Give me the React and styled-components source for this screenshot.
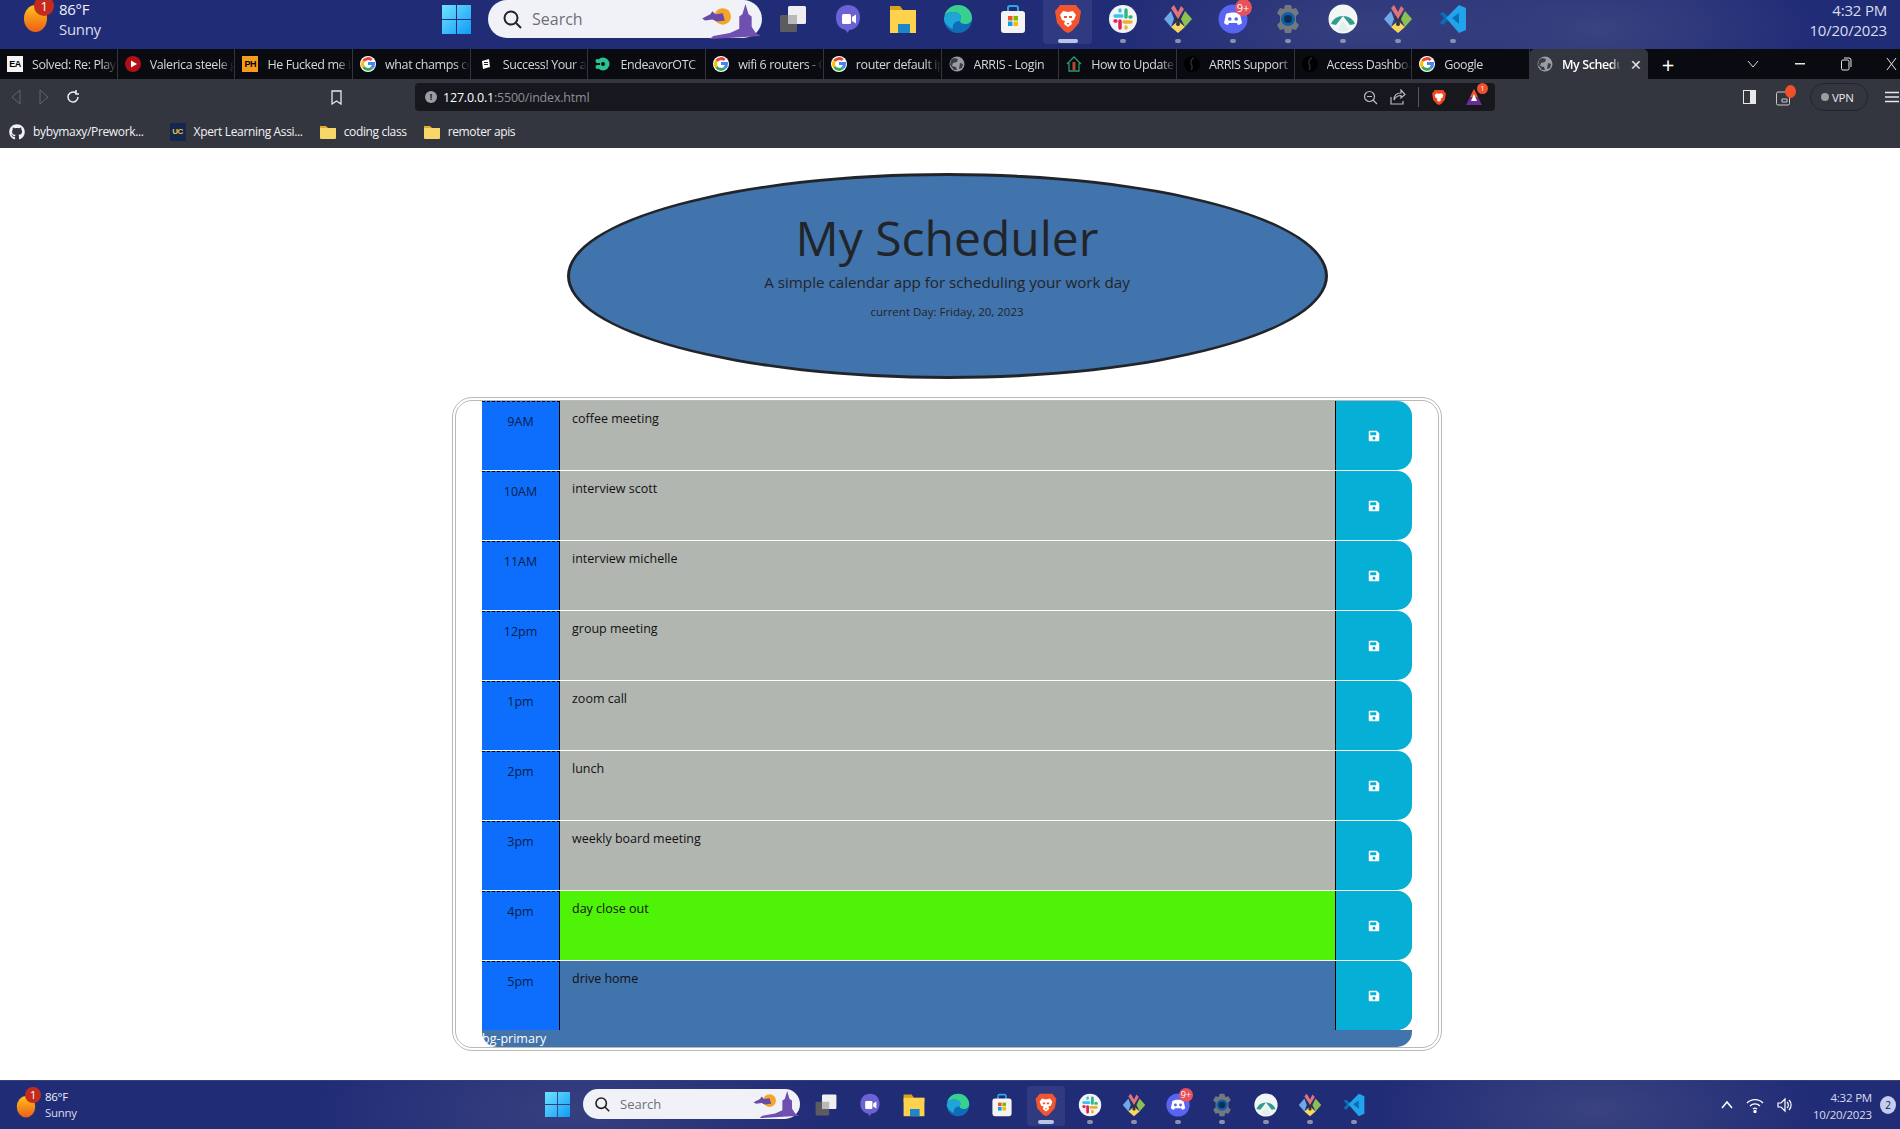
import React from "react";
import styled, { createGlobalStyle } from "styled-components";
import { FaSave, FaGithub } from "react-icons/fa";

const GlobalStyle = createGlobalStyle`
  html, body {
    margin: 0;
    padding: 0;
    height: 100%;
    overflow: hidden;
    background: #fff;
    font-family: "Open Sans", "Liberation Sans", sans-serif;
  }
`;

const hours = [
  { time: "9AM", text: "coffee meeting", tone: "past" },
  { time: "10AM", text: "interview scott", tone: "past" },
  { time: "11AM", text: "interview michelle", tone: "past" },
  { time: "12pm", text: "group meeting", tone: "past" },
  { time: "1pm", text: "zoom call", tone: "past" },
  { time: "2pm", text: "lunch", tone: "past" },
  { time: "3pm", text: "weekly board meeting", tone: "past" },
  { time: "4pm", text: "day close out", tone: "present" },
  { time: "5pm", text: "drive home", tone: "future" },
];

const toneColors = { past: "#b2b6b1", present: "#4ff307", future: "#4173ac" };

/* ---------- icons ---------- */

const WinLogo = () => (
  <svg viewBox="0 0 28 28" width="100%" height="100%">
    <defs>
      <linearGradient id="win" x1="0" y1="0" x2="1" y2="1">
        <stop offset="0" stopColor="#6fe3ff" />
        <stop offset="1" stopColor="#0f9bf5" />
      </linearGradient>
    </defs>
    <path fill="url(#win)" d="M0 0h13.5v13.5H0zM14.5 0H28v13.5H14.5zM0 14.5h13.5V28H0zM14.5 14.5H28V28H14.5z" />
  </svg>
);

const TaskView = () => (
  <svg viewBox="0 0 30 30">
    <rect x="2" y="11" width="17" height="17" rx="1.5" fill="#5c5c60" />
    <rect x="10" y="2" width="18" height="18" rx="1.5" fill="#efeff1" />
    <rect x="10" y="11" width="9" height="9" fill="#b9b9bc" />
  </svg>
);

const Meet = () => (
  <svg viewBox="0 0 30 30">
    <path fill="#6b62d6" d="M15 1c7.2 0 12 5 12 12.5S22 26 16 26l-1 3-3-3.300C6 24.500 3 19.500 3 13.500 3 6 8 1 15 1z" />
    <rect x="9" y="10" width="9" height="10" rx="1.500" fill="#fff" />
    <path fill="#fff" d="M19 13l4-2.500v9L19 17z" />
  </svg>
);

const Folder = () => (
  <svg viewBox="0 0 30 30">
    <path fill="#d9a21b" d="M2 2h10l3 4h13v6H2z" />
    <rect x="2" y="6" width="26" height="23" fill="#ffd24d" />
    <rect x="10" y="20" width="12" height="9" fill="#1c86c9" />
  </svg>
);

const Edge = () => (
  <svg viewBox="0 0 30 30">
    <circle cx="15" cy="15" r="14" fill="#0f6cb8" />
    <path fill="#38d08f" d="M1.500 12C3 5 9 1 15 1c8 0 14 6 14 13 0 4-3 6-7 6-3 0-5-1-5-3 0-1 1-2 1-3.500C18 10 14 8 10 8c-4 0-7 1.500-8.500 4z" />
    <path fill="#1fa5d8" d="M10 8c4 0 8 2 8 5.500 0 1.500-1 2.500-1 3.500-5 0-8 3-7 8C5 23 1 19 1 15c0-4 4-7 9-7z" />
  </svg>
);

const Store = () => (
  <svg viewBox="0 0 30 30">
    <path fill="none" stroke="#2aa7e8" strokeWidth="2" d="M10 9V4a2 2 0 0 1 2-2h6a2 2 0 0 1 2 2v5" />
    <rect x="3" y="7" width="24" height="22" rx="3" fill="#f3f3f3" />
    <rect x="10" y="12" width="4.500" height="4.500" fill="#f25022" />
    <rect x="15.500" y="12" width="4.500" height="4.500" fill="#7fba00" />
    <rect x="10" y="17.500" width="4.500" height="4.500" fill="#00a4ef" />
    <rect x="15.500" y="17.500" width="4.500" height="4.500" fill="#ffb900" />
  </svg>
);

const Brave = ({ small }) => (
  <svg viewBox="0 0 30 30">
    <path fill="#f1481f" d="M7 1h16l3 4 2 2-2 12-7 8-4 2-4-2-7-8L2 7l2-2z" />
    <path fill="#fff" d="M10 7l5 1 5-1 3 4-2 5-3 1 1 3-4 3-4-3 1-3-3-1-2-5z" />
    {!small && <path fill="#f1481f" d="M11 12h3v2h-3zM16 12h3v2h-3zM13.500 19h3l-1.500 2z" />}
  </svg>
);

const Slack = () => (
  <svg viewBox="0 0 30 30">
    <circle cx="15" cy="15" r="14" fill="#f4f4f4" />
    <path stroke="#36c5f0" strokeWidth="3.400" strokeLinecap="round" d="M7 12h7M12 6v1" />
    <path stroke="#2eb67d" strokeWidth="3.400" strokeLinecap="round" d="M18 6v7M23 13h-1" />
    <path stroke="#ecb22e" strokeWidth="3.400" strokeLinecap="round" d="M23 18h-7M18 24v-1" />
    <path stroke="#e01e5a" strokeWidth="3.400" strokeLinecap="round" d="M12 24v-7M7 17h1" />
  </svg>
);

const Kraken = () => (
  <svg viewBox="0 0 30 30">
    <path fill="#6ea8e8" d="M1 15l7-8 3 8-3 8z" />
    <path fill="#8cc152" d="M29 15l-7-8-4 8 4 8z" />
    <path fill="#f6d860" d="M15 29l-7-6 7-6 7 6z" />
    <path fill="#e2737b" d="M11 1l4 7 3-6 3 3-6 10-7-11z" />
    <circle cx="15" cy="20" r="2" fill="#333" />
    <path stroke="#333" strokeWidth="1.500" d="M12 12l3 8 3-8" fill="none" />
  </svg>
);

const Discord = () => (
  <svg viewBox="0 0 30 30">
    <circle cx="15" cy="15" r="14.500" fill="#5865f2" />
    <path fill="#fff" d="M8 10c4-2 10-2 14 0l2 9c-1 1-3 2-4 2l-1-2H11l-1 2c-1 0-3-1-4-2z" />
    <circle cx="11.800" cy="15" r="1.800" fill="#5865f2" />
    <circle cx="18.200" cy="15" r="1.800" fill="#5865f2" />
  </svg>
);

const Gear = () => (
  <svg viewBox="0 0 30 30">
    <path fill="#74787f" d="M12 1h6l1 4 4-1 3 5-3 3v6l3 3-3 5-4-1-1 4h-6l-1-4-4 1-3-5 3-3v-6L4 9l3-5 4 1z" />
    <circle cx="15" cy="15" r="7" fill="#0f5ea8" />
    <circle cx="15" cy="15" r="4" fill="#0a2e52" />
  </svg>
);

const Peak = () => (
  <svg viewBox="0 0 30 30">
    <circle cx="15" cy="15" r="14.500" fill="#f2f7f5" />
    <path fill="#2f9d90" d="M3 20a13 13 0 0 1 24 0l-5 1-7-9-7 9z" />
    <path fill="#2f9d90" d="M15 17l6 9a13 13 0 0 1-12 0z" opacity=".08" />
  </svg>
);

const VsCode = () => (
  <svg viewBox="0 0 30 30">
    <path fill="#0a6fb5" d="M2 10l3-2 7 6-7 7-3-2 4-5zM12 14L22 2v9l-6 3 6 5v9z" />
    <path fill="#22a4ec" d="M21 1l7 3v22l-7 3-13-15z" />
    <path fill="#0a6fb5" d="M21 9l-7 5 7 6z" />
  </svg>
);

const Weather = () => (
  <svg viewBox="0 0 26 28">
    <defs>
      <linearGradient id="sun" x1="0" y1="0" x2="0" y2="1">
        <stop offset="0" stopColor="#ffc21d" />
        <stop offset="1" stopColor="#ee5f14" />
      </linearGradient>
    </defs>
    <ellipse cx="13" cy="14" rx="12" ry="14" fill="url(#sun)" />
  </svg>
);

const CastleArt = () => (
  <svg viewBox="0 0 60 34">
    <circle cx="22" cy="12" r="8" fill="#f4a62a" />
    <path fill="#6a4aa8" d="M2 14l8-4 2-3 3 3 7-1 2 7-8 1-4-2-7 1z" />
    <path fill="#6f4fb0" d="M38 24V12l3-2 3-10 3 10 3 2v10l4 6 5 3-50 3 4-3 16-3z" />
  </svg>
);

const Google = () => (
  <svg viewBox="0 0 16 16">
    <circle cx="8" cy="8" r="8" fill="#fff" />
    <path fill="none" strokeWidth="3" stroke="#ea4335" d="M3.500 5a5.500 5.500 0 0 1 8.200-1" />
    <path fill="none" strokeWidth="3" stroke="#fbbc05" d="M3.500 5a5.500 5.500 0 0 0 0 6" />
    <path fill="none" strokeWidth="3" stroke="#34a853" d="M3.500 11a5.500 5.500 0 0 0 8.200 1" />
    <path fill="none" strokeWidth="3" stroke="#4285f4" d="M11.700 12a5.500 5.500 0 0 0 1.800-4.500H8" />
  </svg>
);

const Globe = () => (
  <svg viewBox="0 0 16 16">
    <circle cx="8" cy="8" r="7.500" fill="#9a9ca3" />
    <path fill="#3b3d45" d="M5 2l4 1-1 3-4 1-1 3 4 1 1 3-3 0-4-5 1-5zM11 7l3 1-1 4-3 1z" />
  </svg>
);

const PlayFav = () => (
  <svg viewBox="0 0 16 16">
    <circle cx="8" cy="8" r="8" fill="#b30f17" />
    <path fill="#fff" d="M6 4.500l6 3.500-6 3.500z" />
  </svg>
);

const Ring = () => (
  <svg viewBox="0 0 16 16">
    <circle cx="8" cy="8" r="8" fill="#000" />
    <path fill="none" stroke="#2b2d33" strokeWidth="1.500" d="M10 2a5 5 0 0 0-3 6 5 5 0 0 1 0 6" />
  </svg>
);

const SuccessFav = () => (
  <svg viewBox="0 0 16 16">
    <path fill="#fff" d="M4 5l7-2 1 8-7 2z" />
    <path fill="#222" d="M6 6h4v1H6zM6 8h4v1H6z" />
  </svg>
);

const Endeavor = () => (
  <svg viewBox="0 0 16 16">
    <circle cx="8" cy="8" r="6.500" fill="#27c48f" />
    <circle cx="2.500" cy="5" r="2" fill="#27c48f" />
    <circle cx="2.500" cy="11" r="2" fill="#27c48f" />
    <circle cx="8" cy="8" r="2" fill="#0a0b10" />
    <rect x="0" y="7" width="5" height="2" fill="#0a0b10" />
  </svg>
);

const HouseFav = () => (
  <svg viewBox="0 0 16 16">
    <path fill="none" stroke="#2b9a6e" strokeWidth="1.300" d="M1 8l7-7 7 7M3 7v8h10V7" />
    <rect x="6.500" y="6" width="3" height="8" fill="#b5472e" />
  </svg>
);

const Ea = styled.span`
  width: 16px;
  height: 16px;
  background: #f4f4f4;
  color: #000;
  font: 800 9px/16px "Liberation Sans", sans-serif;
  text-align: center;
`;

const Ph = styled(Ea)`
  background: #f79b1c;
`;

const tabs = [
  { title: "Solved: Re: Play", icon: <Ea>EA</Ea> },
  { title: "Valerica steele g", icon: <PlayFav /> },
  { title: "He Fucked me in", icon: <Ph>PH</Ph> },
  { title: "what champs co", icon: <Google /> },
  { title: "Success! Your a", icon: <SuccessFav /> },
  { title: "EndeavorOTC", icon: <Endeavor /> },
  { title: "wifi 6 routers - C", icon: <Google /> },
  { title: "router default ip", icon: <Google /> },
  { title: "ARRIS - Login", icon: <Globe /> },
  { title: "How to Update", icon: <HouseFav /> },
  { title: "ARRIS Support", icon: <Ring /> },
  { title: "Access Dashboa", icon: <Ring /> },
  { title: "Google", icon: <Google /> },
  { title: "My Schedule", icon: <Globe />, active: true },
];

const apps = [
  { icon: <TaskView /> },
  { icon: <Meet /> },
  { icon: <Folder /> },
  { icon: <Edge /> },
  { icon: <Store /> },
  { icon: <Brave />, active: true, dot: true },
  { icon: <Slack />, dot: true },
  { icon: <Kraken />, dot: true },
  { icon: <Discord />, dot: true, badge: "9+" },
  { icon: <Gear />, dot: true },
  { icon: <Peak />, dot: true },
  { icon: <Kraken />, dot: true },
  { icon: <VsCode />, dot: true },
];

/* ---------- taskbar ---------- */

const Bar = styled.div`
  position: relative;
  display: flex;
  flex: none;
  height: ${(p) => (p.$big ? "49px" : "48px")};
  overflow: hidden;
  background: radial-gradient(ellipse 260px 90px at ${(p) => (p.$big ? "72%" : "30%")} 60%, #37407e, transparent),
    radial-gradient(ellipse 220px 90px at 84% 60%, #3a437f, transparent), #212c77;
  border-top: ${(p) => (p.$big ? "none" : "1px solid #34407e")};
  color: #eef0f8;
`;

const WeatherBox = styled.div`
  position: relative;
  flex: none;
  width: ${(p) => (p.$big ? "442px" : "545px")};
  box-sizing: border-box;
  padding-left: ${(p) => (p.$big ? "59px" : "45px")};
  padding-top: ${(p) => (p.$big ? "0" : "8px")};
  font-size: ${(p) => (p.$big ? "15px" : "11.5px")};
  line-height: ${(p) => (p.$big ? "19px" : "16px")};
  letter-spacing: -0.3px;
`;

const SunIcon = styled.div`
  position: absolute;
  left: ${(p) => (p.$big ? "23px" : "16px")};
  top: ${(p) => (p.$big ? "5px" : "15px")};
  width: ${(p) => (p.$big ? "25px" : "20px")};
  height: ${(p) => (p.$big ? "30px" : "23px")};
  svg {
    display: block;
  }
`;

const RedBadge = styled.span`
  position: absolute;
  left: ${(p) => (p.$big ? "34px" : "25px")};
  top: ${(p) => (p.$big ? "-4px" : "6px")};
  width: ${(p) => (p.$big ? "20px" : "16px")};
  height: ${(p) => (p.$big ? "20px" : "16px")};
  border-radius: 50%;
  background: #c42b1c;
  color: #fff;
  font-size: ${(p) => (p.$big ? "13px" : "11px")};
  line-height: ${(p) => (p.$big ? "20px" : "16px")};
  text-align: center;
`;

const WeatherCondition = styled.div`
  margin-top: ${(p) => (p.$big ? "1px" : "0")};
  color: #d9dcec;
`;

const LogoSlot = styled.div`
  flex: none;
  width: ${(p) => (p.$big ? "29px" : "25px")};
  height: ${(p) => (p.$big ? "29px" : "25px")};
  margin-top: ${(p) => (p.$big ? "5px" : "11px")};
  margin-right: ${(p) => (p.$big ? "17px" : "13px")};
`;

const SearchPill = styled.div`
  position: relative;
  flex: none;
  display: flex;
  align-items: center;
  box-sizing: border-box;
  width: ${(p) => (p.$big ? "274px" : "217px")};
  height: ${(p) => (p.$big ? "38px" : "30px")};
  margin-top: ${(p) => (p.$big ? "0" : "8px")};
  margin-right: ${(p) => (p.$big ? "3px" : "4px")};
  padding-left: ${(p) => (p.$big ? "14px" : "11px")};
  gap: ${(p) => (p.$big ? "10px" : "10px")};
  border-radius: 20px;
  background: #f1f2f7;
  color: #6e6f76;
  font-size: ${(p) => (p.$big ? "16px" : "13px")};
`;

const PillArt = styled.div`
  position: absolute;
  right: 0;
  bottom: 0;
  width: ${(p) => (p.$big ? "62px" : "48px")};
  height: ${(p) => (p.$big ? "34px" : "28px")};
`;

const AppSlot = styled.div`
  position: relative;
  flex: none;
  display: flex;
  justify-content: center;
  width: ${(p) => (p.$big ? "55px" : "44px")};
  svg {
    display: block;
    width: ${(p) => (p.$big ? "30px" : "24px")};
    height: ${(p) => (p.$big ? "34px" : "26px")};
    margin-top: ${(p) => (p.$big ? "2px" : "11px")};
  }
  ${(p) => p.$active && `
    &::before {
      content: "";
      position: absolute;
      top: ${p.$big ? "-2px" : "5px"};
      bottom: ${p.$big ? "5px" : "3px"};
      left: 3px;
      right: 3px;
      border-radius: 4px;
      background: rgba(255, 255, 255, 0.07);
    }
  `}
`;

const Dot = styled.span`
  position: absolute;
  left: 50%;
  top: ${(p) => (p.$big ? "39px" : "39px")};
  width: ${(p) => (p.$active ? (p.$big ? "20px" : "16px") : "6px")};
  height: 4px;
  margin-left: ${(p) => (p.$active ? (p.$big ? "-10px" : "-8px") : "-3px")};
  border-radius: 2px;
  background: ${(p) => (p.$active ? "#b9c4e6" : "#8a90ad")};
`;

const AppBadge = styled.span`
  position: absolute;
  top: ${(p) => (p.$big ? "-1px" : "7px")};
  left: 50%;
  margin-left: ${(p) => (p.$big ? "2px" : "1px")};
  width: ${(p) => (p.$big ? "17px" : "14px")};
  height: ${(p) => (p.$big ? "17px" : "14px")};
  border-radius: 50%;
  background: #e8505b;
  color: #fff;
  font-size: ${(p) => (p.$big ? "11px" : "9px")};
  line-height: ${(p) => (p.$big ? "17px" : "14px")};
  text-align: center;
`;

const Tray = styled.div`
  display: flex;
  align-items: center;
  margin-left: auto;
`;

const TrayIcons = styled.div`
  display: flex;
  align-items: center;
  gap: 13px;
  margin-right: 20px;
`;

const Clock = styled.div`
  text-align: right;
  font-size: ${(p) => (p.$big ? "15px" : "11.5px")};
  line-height: ${(p) => (p.$big ? "20px" : "17px")};
  letter-spacing: -0.2px;
  margin-right: ${(p) => (p.$big ? "13px" : "8px")};
  padding-top: ${(p) => (p.$big ? "0" : "2px")};
  align-self: ${(p) => (p.$big ? "flex-start" : "center")};
  color: #d9dcec;
`;

const NoteBadge = styled.span`
  width: 16px;
  height: 18px;
  margin-right: 4px;
  border-radius: 50%;
  background: #c3cdf0;
  color: #14193f;
  font-size: 10px;
  line-height: 18px;
  text-align: center;
`;

const SearchGlass = ({ size }) => (
  <svg viewBox="0 0 20 20" width={size} height={size} fill="none" stroke="#222" strokeWidth="2">
    <circle cx="9" cy="9" r="6.500" />
    <path d="M14 14l5 5" />
  </svg>
);

const Taskbar = ({ big }) => (
  <Bar $big={big}>
    <WeatherBox $big={big}>
      <SunIcon $big={big}><Weather /></SunIcon>
      <RedBadge $big={big}>1</RedBadge>
      <div>86°F</div>
      <WeatherCondition $big={big}>Sunny</WeatherCondition>
    </WeatherBox>
    <LogoSlot $big={big}><WinLogo /></LogoSlot>
    <SearchPill $big={big}>
      <SearchGlass size={big ? 20 : 16} />
      Search
      <PillArt $big={big}><CastleArt /></PillArt>
    </SearchPill>
    {apps.map((app, index) => (
      <AppSlot key={index} $big={big} $active={app.active}>
        {app.icon}
        {app.dot && <Dot $big={big} $active={app.active} />}
        {app.badge && <AppBadge $big={big}>{app.badge}</AppBadge>}
      </AppSlot>
    ))}
    <Tray>
      {!big && (
        <TrayIcons>
          <svg width="12" height="10" viewBox="0 0 12 10" fill="none" stroke="#fff" strokeWidth="1.500"><path d="M1 8l5-6 5 6" /></svg>
          <svg width="18" height="16" viewBox="0 0 18 16" fill="none" stroke="#fff" strokeWidth="1.300">
            <path d="M1 6a11 11 0 0 1 16 0M4 9a7 7 0 0 1 10 0M7 12a3 3 0 0 1 4 0" />
            <circle cx="9" cy="14.500" r="1" fill="#fff" />
          </svg>
          <svg width="16" height="16" viewBox="0 0 16 16" fill="none" stroke="#fff" strokeWidth="1.200">
            <path d="M1 6h3l4-4v12l-4-4H1zM10 5a4 4 0 0 1 0 6M12 3a7 7 0 0 1 0 10" />
          </svg>
        </TrayIcons>
      )}
      <Clock $big={big}>
        <div>4:32 PM</div>
        <div>10/20/2023</div>
      </Clock>
      {!big && <NoteBadge>2</NoteBadge>}
    </Tray>
  </Bar>
);

/* ---------- browser chrome ---------- */

const TabStrip = styled.div`
  display: flex;
  flex: none;
  align-items: stretch;
  height: 30px;
  background: #0a0b11;
`;

const Tab = styled.div`
  flex: none;
  display: flex;
  align-items: center;
  box-sizing: border-box;
  width: 117.7px;
  padding-left: 7px;
  gap: 9px;
  color: ${(p) => (p.$active ? "#fff" : "#d5d6da")};
  background: ${(p) => (p.$active ? "#33363f" : "transparent")};
  border-radius: ${(p) => (p.$active ? "5px 5px 0 0" : "0")};
  border-right: ${(p) => (p.$active ? "none" : "1px solid #33353c")};
  font-size: 12.5px;
  letter-spacing: -0.4px;
  svg, ${Ea} {
    flex: none;
    width: 16px;
    height: 16px;
  }
`;

const TabTitle = styled.span`
  flex: 1;
  overflow: hidden;
  white-space: nowrap;
  font-weight: ${(p) => (p.$active ? 600 : 400)};
  mask-image: linear-gradient(to right, #000 82%, transparent 100%);
`;

const TabClose = styled.span`
  flex: none;
  width: 18px;
  font-size: 14px;
  color: #e8e8ea;
`;

const WindowControls = styled.div`
  display: flex;
  align-items: center;
  flex: 1;
  color: #e6e6e8;
`;

const NewTab = styled.span`
  margin-left: 14px;
  font-size: 22px;
  font-weight: 400;
  line-height: 30px;
  color: #fff;
`;

const WindowButton = styled.span`
  position: absolute;
  left: ${(p) => p.$x}px;
  top: 49px;
  display: flex;
  align-items: center;
  height: 30px;
`;

const Toolbar = styled.div`
  display: flex;
  flex: none;
  align-items: flex-start;
  height: 36px;
  padding-top: 4px;
  box-sizing: border-box;
  background: #33363f;
`;

const NavButtons = styled.div`
  display: flex;
  flex: none;
  align-items: center;
  height: 28px;
  width: 415px;
  box-sizing: border-box;
  padding-left: 10px;
  gap: 16px;
`;

const BookmarkIcon = styled.svg`
  margin-left: 235px;
`;

const Address = styled.div`
  flex: none;
  display: flex;
  align-items: center;
  box-sizing: border-box;
  width: 1080px;
  height: 28px;
  padding: 0 12px;
  border-radius: 4px;
  background: #16181e;
  font-size: 12.5px;
  letter-spacing: -0.2px;
  color: #fff;
`;

const UrlInfo = styled.span`
  width: 12px;
  height: 12px;
  margin-right: 6px;
  margin-left: -2px;
  border-radius: 50%;
  background: #9b9da3;
  color: #16181e;
  font-size: 9px;
  font-weight: 700;
  line-height: 12px;
  text-align: center;
`;

const UrlRest = styled.span`
  color: #8d8f96;
`;

const AddressTools = styled.div`
  display: flex;
  align-items: center;
  margin-left: auto;
  gap: 12px;
  svg {
    display: block;
  }
`;

const ToolDivider = styled.span`
  width: 1px;
  height: 20px;
  background: #555760;
`;

const AlertWrap = styled.span`
  position: relative;
  display: block;
  width: 18px;
  height: 18px;
  margin-left: 6px;
`;

const AlertCount = styled.span`
  position: absolute;
  right: -5px;
  top: -5px;
  width: 11px;
  height: 11px;
  border-radius: 50%;
  background: #f0502a;
  color: #fff;
  font-size: 7px;
  line-height: 11px;
  text-align: center;
`;

const RightTools = styled.div`
  display: flex;
  flex: none;
  align-items: center;
  height: 28px;
  margin-left: 248px;
  gap: 20px;
  color: #e8e8ea;
`;

const WalletWrap = styled.span`
  position: relative;
  display: block;
  width: 15px;
  height: 16px;
  &::after {
    content: "";
    position: absolute;
    right: -5px;
    top: -4px;
    width: 11px;
    height: 13px;
    border-radius: 50%;
    background: #f0502a;
  }
`;

const VpnPill = styled.span`
  display: flex;
  align-items: center;
  gap: 3px;
  box-sizing: border-box;
  width: 58px;
  height: 28px;
  margin-left: -1px;
  padding-left: 10px;
  border: 1px solid #24262d;
  border-radius: 14px;
  font-size: 11.5px;
  letter-spacing: -0.3px;
`;

const VpnDot = styled.span`
  width: 8px;
  height: 8px;
  border-radius: 50%;
  background: #9b9da3;
`;

const MenuLines = styled.svg`
  margin-left: -3px;
`;

const BookmarkBar = styled.div`
  display: flex;
  flex: none;
  align-items: center;
  height: 33px;
  padding-left: 9px;
  background: #33363f;
  color: #f2f2f4;
  font-size: 12px;
  letter-spacing: -0.35px;
`;

const BookmarkItem = styled.div`
  display: flex;
  align-items: center;
  gap: 8px;
  margin-right: ${(p) => p.$gap}px;
  white-space: nowrap;
`;

const UcMark = styled.span`
  width: 16px;
  height: 18px;
  background: #13284c;
  color: #f0c23c;
  font: 700 8px/18px "Liberation Sans", sans-serif;
  text-align: center;
`;

const FolderMark = () => (
  <svg width="16" height="14" viewBox="0 0 16 14">
    <path fill="#e0a92b" d="M0 1h6l2 2h8v3H0z" />
    <rect y="3" width="16" height="11" rx="1" fill="#f7d66a" />
  </svg>
);

/* ---------- page ---------- */

const Desktop = styled.div`
  display: flex;
  flex-direction: column;
  height: 100vh;
  overflow: hidden;
`;

const Page = styled.main`
  flex: 1;
  display: flex;
  flex-direction: column;
  align-items: center;
  padding-right: 6px;
  background: #fff;
`;

const Jumbotron = styled.header`
  flex: none;
  box-sizing: border-box;
  width: 761px;
  height: 206px;
  margin-top: 25px;
  padding-top: 33px;
  border: 3px solid #212529;
  border-radius: 50%;
  background: #4173ac;
  color: #212529;
  text-align: center;
`;

const Title = styled.h1`
  margin: 0;
  font-size: 48px;
  font-weight: 400;
  line-height: 58px;
`;

const Lead = styled.p`
  margin: 4px 0 0;
  font-size: 15.2px;
  font-weight: 400;
  line-height: 22px;
`;

const CurrentDay = styled.p`
  margin: 11px 0 0;
  font-size: 11.5px;
  line-height: 16px;
`;

const Board = styled.section`
  flex: none;
  width: 990px;
  box-sizing: border-box;
  margin-top: 18px;
  padding: 0 26px;
  border: 4px double #b9b9b9;
  border-radius: 20px;
`;

const Row = styled.div`
  display: grid;
  grid-template-columns: 78px 1fr 77px;
  height: 69px;
  margin-bottom: 1px;
  border-radius: 0 15px 15px 0;
  background: ${(p) => (p.$tone === "past" ? "transparent" : toneColors[p.$tone])};
`;

const Hour = styled.div`
  box-sizing: border-box;
  padding-top: 11px;
  border-top: 1px dashed #000;
  border-right: 1px solid #000;
  background: #0d6efd;
  color: #0a1f44;
  font-size: 12.5px;
  line-height: 18px;
  text-align: center;
`;

const Task = styled.div`
  padding: 9px 12px;
  background: ${(p) => toneColors[p.$tone]};
  color: #111;
  font-size: 12.5px;
  line-height: 18px;
`;

const SaveButton = styled.button`
  display: flex;
  align-items: center;
  justify-content: center;
  padding: 0;
  border: none;
  border-left: 1px solid #000;
  border-radius: 0 15px 15px 0;
  background: #06afd6;
  color: #fff;
  font-size: 12px;
`;

const Footer = styled.div`
  height: 17px;
  margin-top: -1px;
  border-radius: 0 0 15px 15px;
  background: #4173ac;
  color: #fff;
  font-size: 12.5px;
  line-height: 17px;
`;

const App = () => (
  <Desktop>
    <GlobalStyle />
    <Taskbar big />
    <TabStrip>
      {tabs.map((tab) => (
        <Tab key={tab.title} $active={tab.active}>
          {tab.icon}
          <TabTitle $active={tab.active}>{tab.title}</TabTitle>
          {tab.active && <TabClose>✕</TabClose>}
        </Tab>
      ))}
      <WindowControls>
        <NewTab>+</NewTab>
        <WindowButton $x={1747}>
          <svg width="12" height="8" viewBox="0 0 12 8" fill="none" stroke="#d8d8da"><path d="M1 1l5 6 5-6" /></svg>
        </WindowButton>
        <WindowButton $x={1795}>
          <svg width="10" height="2"><rect width="10" height="1.500" fill="#e6e6e8" /></svg>
        </WindowButton>
        <WindowButton $x={1841}>
          <svg width="11" height="14" viewBox="0 0 11 14" fill="none" stroke="#e6e6e8"><rect x=".5" y="3" width="7.500" height="10" rx="1.500" /><path d="M3 1h5a2 2 0 0 1 2 2v7" /></svg>
        </WindowButton>
        <WindowButton $x={1886}>
          <svg width="11" height="14" viewBox="0 0 11 14" stroke="#e6e6e8"><path d="M1 1l9 12M10 1L1 13" /></svg>
        </WindowButton>
      </WindowControls>
    </TabStrip>
    <Toolbar>
      <NavButtons>
        <svg width="12" height="16" viewBox="0 0 12 16" fill="none" stroke="#62646b"><path d="M10 1L2 8l8 7z" /></svg>
        <svg width="12" height="16" viewBox="0 0 12 16" fill="none" stroke="#62646b"><path d="M2 1l8 7-8 7z" /></svg>
        <svg width="14" height="14" viewBox="0 0 14 14" fill="none" stroke="#f0f0f2" strokeWidth="1.500"><path d="M12 7a5 5 0 1 1-2-4M10 0v4h3" /></svg>
        <BookmarkIcon width="11" height="15" viewBox="0 0 11 15" fill="none" stroke="#e8e8ea" strokeWidth="1.300"><path d="M1 1h9v13l-4.500-3L1 14z" /></BookmarkIcon>
      </NavButtons>
      <Address>
        <UrlInfo>!</UrlInfo>
        127.0.0.1<UrlRest>:5500/index.html</UrlRest>
        <AddressTools>
          <svg width="15" height="15" viewBox="0 0 15 15" fill="none" stroke="#b8bac0" strokeWidth="1.200"><circle cx="6.500" cy="6.500" r="5" /><path d="M10 10l4 4M4 6.500h5" /></svg>
          <svg width="16" height="16" viewBox="0 0 16 16" fill="none" stroke="#b8bac0" strokeWidth="1.200"><path d="M1 8v7h12v-3M4 11c0-5 3-7 7-7V1l4 4.500L11 9V6.500C8 6.500 5.500 8 4 11z" /></svg>
          <ToolDivider />
          <svg width="16" height="19" viewBox="0 0 30 30"><path fill="#f1481f" d="M7 1h16l3 4 2 2-2 12-7 8-4 2-4-2-7-8L2 7l2-2z" /><path fill="#fff" d="M10 7l5 1 5-1 3 4-2 5-3 1 1 3-4 3-4-3 1-3-3-1-2-5z" /></svg>
          <AlertWrap>
            <svg width="18" height="18" viewBox="0 0 18 18"><path fill="#6a2c8f" d="M9 1l8 16H1z" /><path fill="#f0502a" d="M9 1l4 8H5z" /><path fill="#fff" d="M9 6l3 7H6z" /></svg>
            <AlertCount>1</AlertCount>
          </AlertWrap>
        </AddressTools>
      </Address>
      <RightTools>
        <svg width="13" height="14" viewBox="0 0 13 14"><rect x=".5" y=".5" width="12" height="13" fill="none" stroke="#e8e8ea" /><rect x="7" y="1" width="5" height="12" fill="#e8e8ea" /></svg>
        <WalletWrap>
          <svg width="14" height="16" viewBox="0 0 14 16" fill="none" stroke="#c8c8cc"><rect x=".5" y="2" width="13" height="13" rx="1.500" /><path d="M6 9h5v3H6z" /></svg>
        </WalletWrap>
        <VpnPill><VpnDot />VPN</VpnPill>
        <MenuLines width="14" height="12" viewBox="0 0 14 12" stroke="#e8e8ea" strokeWidth="1.300"><path d="M0 1.500h14M0 6h14M0 10.500h14" /></MenuLines>
      </RightTools>
    </Toolbar>
    <BookmarkBar>
      <BookmarkItem $gap={26}><FaGithub size={16} />bybymaxy/Prework...</BookmarkItem>
      <BookmarkItem $gap={17}><UcMark>UC</UcMark>Xpert Learning Assi...</BookmarkItem>
      <BookmarkItem $gap={17}><FolderMark />coding class</BookmarkItem>
      <BookmarkItem $gap={0}><FolderMark />remoter apis</BookmarkItem>
    </BookmarkBar>
    <Page>
      <Jumbotron>
        <Title>My Scheduler</Title>
        <Lead>A simple calendar app for scheduling your work day</Lead>
        <CurrentDay>current Day: Friday, 20, 2023</CurrentDay>
      </Jumbotron>
      <Board>
        {hours.map((hour) => (
          <Row key={hour.time} $tone={hour.tone}>
            <Hour>{hour.time}</Hour>
            <Task $tone={hour.tone}>{hour.text}</Task>
            <SaveButton aria-label={`save ${hour.time}`}><FaSave /></SaveButton>
          </Row>
        ))}
        <Footer>bg-primary</Footer>
      </Board>
    </Page>
    <Taskbar />
  </Desktop>
);

export default App;
